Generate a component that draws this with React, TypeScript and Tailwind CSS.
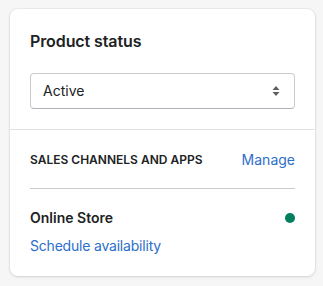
import React from "react";

export default function App() {
  return (
    <div
      className="w-[323px] h-[286px] bg-[#f6f6f7] pt-[9px] pl-[10px]"
      style={{ fontFamily: "Inter, 'Noto Sans', sans-serif" }}
    >
      <div className="w-[305px] h-[267px] bg-white rounded-lg shadow-[0_0_0_1px_rgba(63,63,68,0.05),0_1px_3px_0_rgba(63,63,68,0.15)] text-[#202223]">
        <div className="px-5 pt-5 pb-5">
          <h2 className="text-[16px] leading-6 font-semibold tracking-[-0.1px]">Product status</h2>
          <div className="mt-5 h-9 rounded-[4px] border border-[#c9cccf] border-b-[#aeb4b9] flex items-center justify-between pl-3 pr-2">
            <span className="text-[14px] leading-5">Active</span>
            <svg width="20" height="20" viewBox="0 0 20 20" className="fill-[#5c5f62]">
              <path d="M10 5l3.5 4H6.5z" />
              <path d="M10 15l-3.5-4h7z" />
            </svg>
          </div>
        </div>
        <div className="border-t border-[#e1e3e5] px-5 pt-5 pb-5">
          <div className="flex items-center justify-between pb-[18px] border-b border-[#c9cccf]">
            <span className="text-[12px] leading-5 font-semibold uppercase tracking-[0px]">Sales channels and apps</span>
            <span className="text-[14px] leading-5 text-[#2c6ecb]">Manage</span>
          </div>
          <div className="pt-[19px] flex items-center justify-between">
            <span className="text-[14px] leading-5 font-semibold">Online Store</span>
            <span className="w-[10px] h-[10px] rounded-full bg-[#007f5f]" />
          </div>
          <div className="mt-2 text-[14px] leading-5 text-[#2c6ecb] tracking-[-0.2px]">Schedule availability</div>
        </div>
      </div>
    </div>
  );
}
